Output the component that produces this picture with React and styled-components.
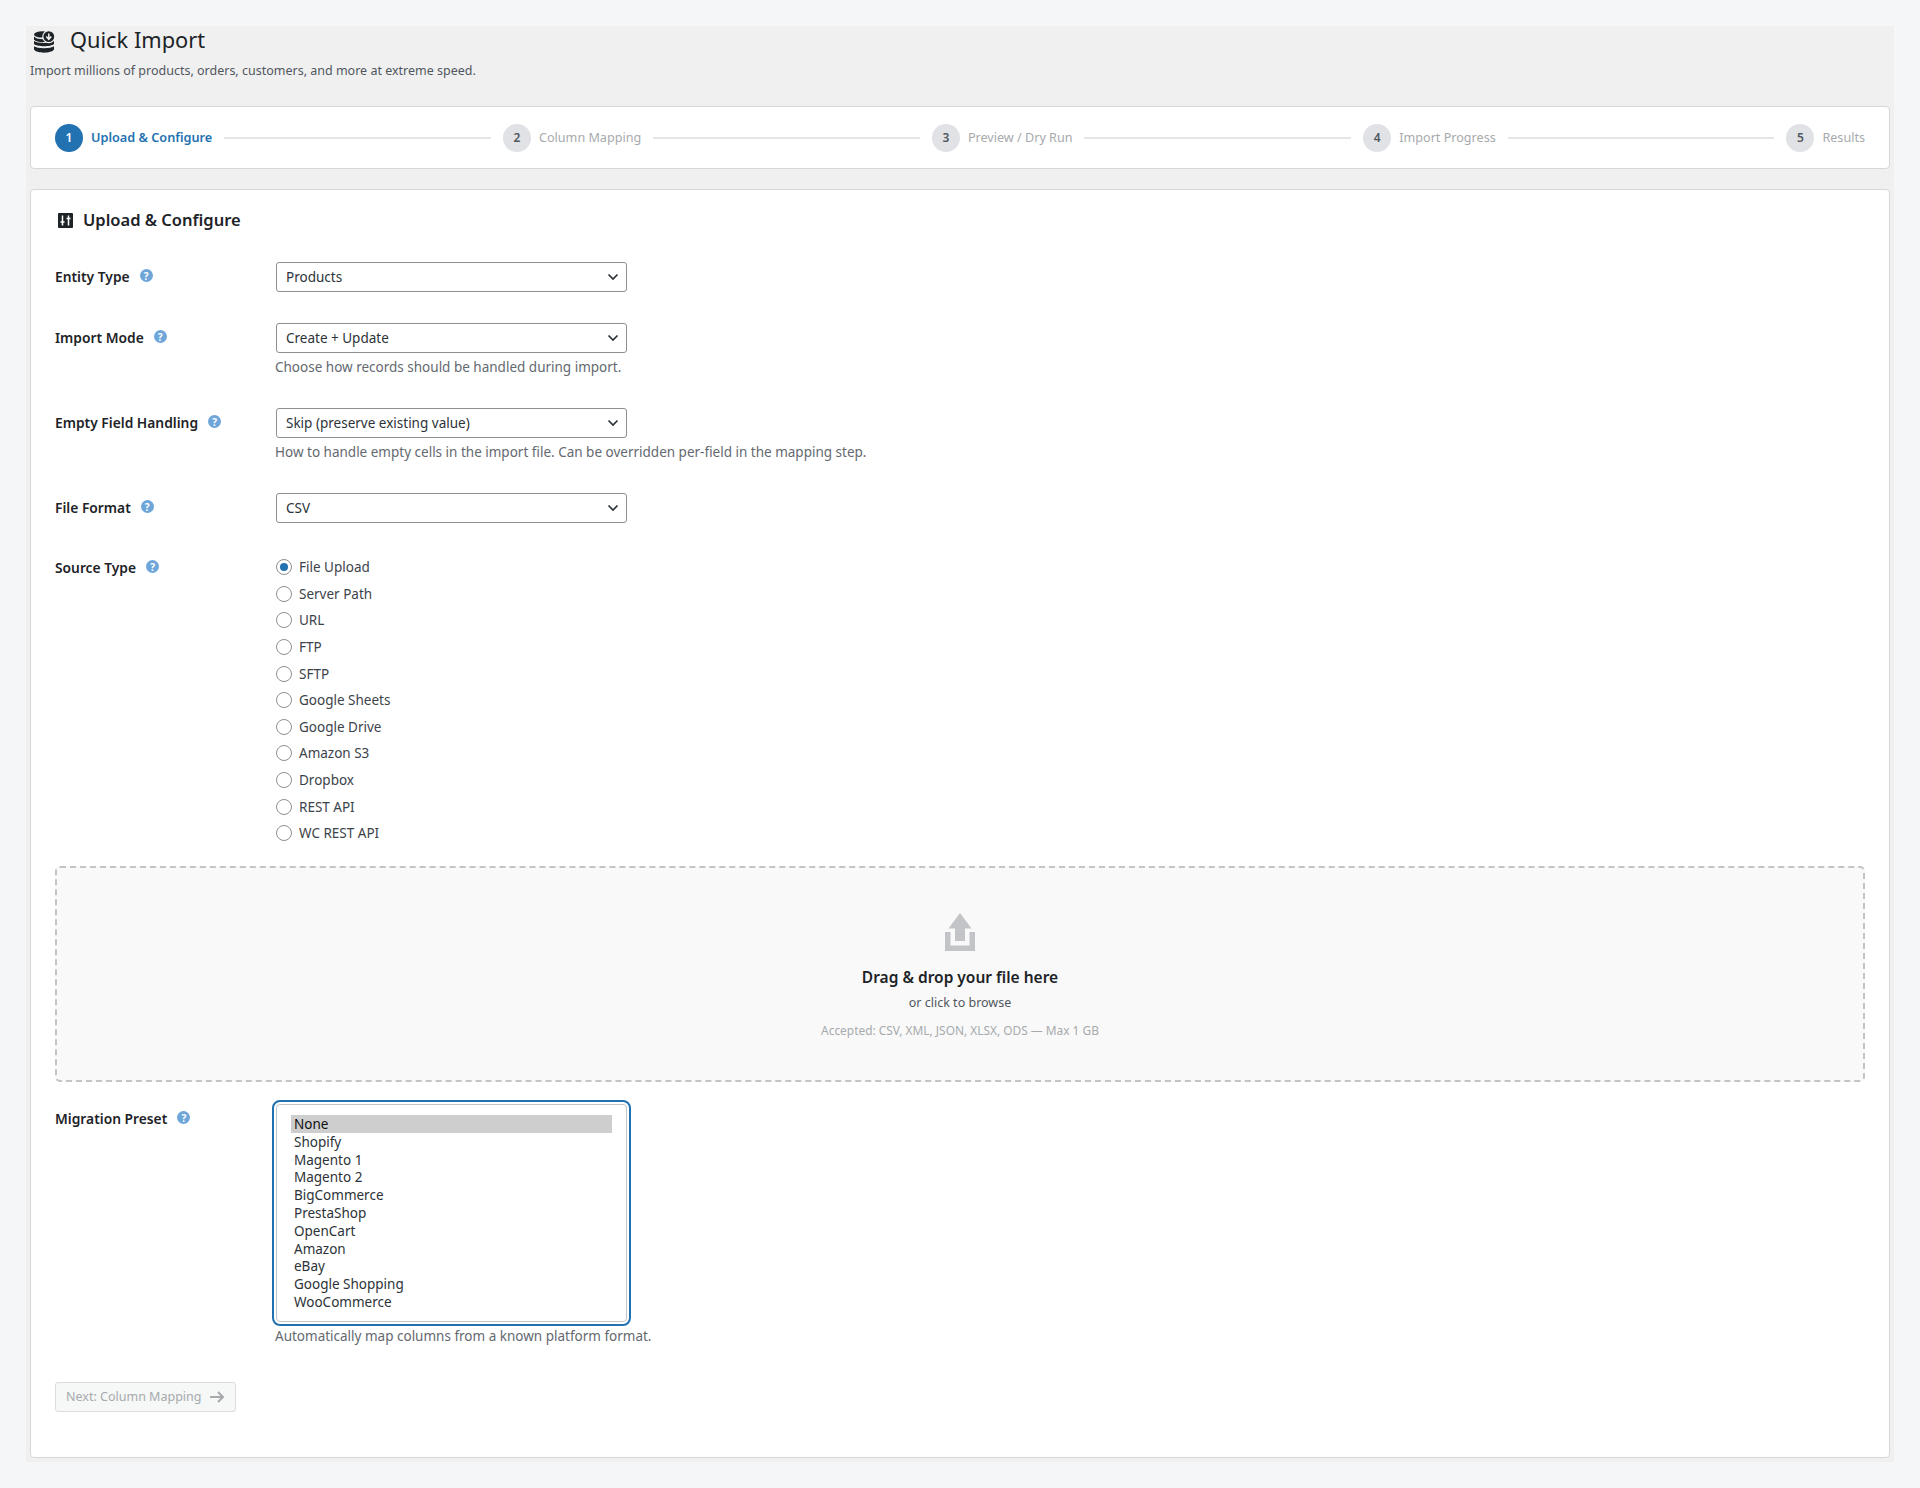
import React from "react";
import styled, { createGlobalStyle } from "styled-components";

const FONT = `"Noto Sans", "Open Sans", sans-serif`;
const CHEVRON = `url("data:image/svg+xml,%3Csvg xmlns='http://www.w3.org/2000/svg' viewBox='0 0 12 8'%3E%3Cpath d='M1.5 1.5 6 6l4.5-4.5' fill='none' stroke='%232c3338' stroke-width='1.7'/%3E%3C/svg%3E")`;

const GlobalStyle = createGlobalStyle`
  html, body {
    margin: 0;
    padding: 0;
    background: #f5f6f8;
  }
  body {
    font-family: ${FONT};
    font-size: 13px;
    color: #3c434a;
  }
`;

const Page = styled.div`
  margin: 26px 26px 27px 26px;
  padding: 0 4px 4px;
  background: #f0f0f1;
`;

const PageTitle = styled.div`
  display: flex;
  align-items: center;
  gap: 15px;
  height: 28px;
  padding: 0 0 0 4px;
`;

const TitleIcon = styled.svg`
  flex: none;
  margin-top: 4px;
`;

const PageHeading = styled.h1`
  margin: -1px 0 0;
  font-size: 21.8px;
  font-weight: 400;
  line-height: 28px;
  color: #1d2327;
`;

const Subtitle = styled.p`
  margin: 7px 0 25px;
  font-size: 12.5px;
  line-height: 20px;
  color: #50575e;
`;

const StepperCard = styled.div`
  display: flex;
  align-items: center;
  height: 63px;
  box-sizing: border-box;
  padding: 0 24px;
  background: #fff;
  border: 1px solid #d5d7da;
  border-radius: 4px;
`;

const Step = styled.div`
  display: flex;
  align-items: center;
  gap: 8px;
  flex: none;
`;

const StepNumber = styled.span`
  display: flex;
  align-items: center;
  justify-content: center;
  width: 28px;
  height: 28px;
  border-radius: 50%;
  font-size: 12px;
  font-weight: 600;
  background: ${({ $active }) => ($active ? "#2271b1" : "#e0e2e6")};
  color: ${({ $active }) => ($active ? "#fff" : "#50575e")};
`;

const StepLabel = styled.span`
  padding-bottom: ${({ $active }) => ($active ? "2px" : "0")};
  font-size: ${({ $active }) => ($active ? "12.7px" : "12.6px")};
  font-weight: ${({ $active }) => ($active ? 600 : 400)};
  color: ${({ $active }) => ($active ? "#2271b1" : "#a7aaad")};
`;

const StepLine = styled.span`
  flex: 1;
  height: 2px;
  margin: 1px 12px 0;
  background: #e3e5e8;
`;

const Card = styled.section`
  margin-top: 20px;
  padding: 20px 24px 45px;
  background: #fff;
  border: 1px solid #d5d7da;
  border-radius: 4px;
`;

const CardTitle = styled.h2`
  display: flex;
  align-items: center;
  gap: 10px;
  margin: 0 0 32px 3px;
  font-size: 16.5px;
  font-weight: 600;
  line-height: 20px;
  color: #1d2327;
`;

const Row = styled.div`
  display: grid;
  grid-template-columns: 220px 1fr;
  margin-bottom: ${({ $gap }) => $gap}px;
`;

const Label = styled.div`
  display: flex;
  align-items: center;
  align-self: start;
  gap: 10px;
  box-sizing: border-box;
  height: 30px;
  padding-bottom: 2px;
  font-size: 13.8px;
  font-weight: 600;
  color: #1d2327;
`;

const Help = styled.span`
  display: flex;
  align-items: center;
  justify-content: center;
  width: 13px;
  height: 13px;
  margin-top: -1px;
  border-radius: 50%;
  background: #6fa6da;
  color: #fff;
  font-size: 10px;
  font-weight: 700;
  line-height: 1;
`;

const Field = styled.div`
  min-width: 0;
`;

const Select = styled.select`
  display: block;
  box-sizing: border-box;
  width: 351px;
  height: 30px;
  margin-left: 1px;
  padding: 0 24px 0 9px;
  appearance: none;
  font-family: ${FONT};
  font-size: 13.5px;
  color: #2c3338;
  background: #fff ${CHEVRON} no-repeat right 7px center / 12px 8px;
  border: 1.5px solid #8c8f94;
  border-radius: 3px;
`;

const ListSelect = styled.select`
  display: block;
  box-sizing: border-box;
  width: 351px;
  height: 218px;
  margin-left: 1px;
  padding: 10px 14px;
  overflow: hidden;
  font-family: ${FONT};
  font-size: 13.5px;
  color: #2c3338;
  background: #fff;
  border: 1.5px solid #c3c4c7;
  border-radius: 4px;
  outline: 2px solid #2271b1;
  outline-offset: 2px;

  option {
    display: block;
    height: 17.8px;
    min-height: 0;
    padding: 0 3px;
    line-height: 17.8px;
  }
`;

const Description = styled.p`
  margin: 4px 0 0;
  font-size: 13.5px;
  line-height: 20px;
  color: #646970;
`;

const RadioList = styled.div`
  display: flex;
  flex-direction: column;
  padding-top: 1px;
`;

const RadioRow = styled.label`
  display: flex;
  align-items: center;
  gap: 7px;
  height: 26.6px;
  padding-left: 1px;
  font-size: 13.5px;
  color: #3c434a;
`;

const Radio = styled.input.attrs({ type: "radio", name: "source" })`
  appearance: none;
  flex: none;
  display: grid;
  place-items: center;
  box-sizing: border-box;
  width: 16px;
  height: 16px;
  margin: 0;
  background: #fff;
  border: 1px solid #8c8f94;
  border-radius: 50%;

  &:checked::before {
    content: "";
    width: 8px;
    height: 8px;
    border-radius: 50%;
    background: #2271b1;
  }
`;

const DropZone = styled.div`
  display: flex;
  flex-direction: column;
  align-items: center;
  box-sizing: border-box;
  height: 216px;
  margin-bottom: 22px;
  padding-top: 45px;
  background: #f9f9f9;
  border: 2px dashed #c3c4c7;
  border-radius: 5px;
`;

const DropTitle = styled.div`
  margin-top: 14px;
  font-size: 15.5px;
  font-weight: 600;
  line-height: 24px;
  color: #1d2327;
`;

const DropHint = styled.div`
  margin-top: 4px;
  font-size: 12.5px;
  line-height: 20px;
  color: #50575e;
`;

const DropAccepted = styled.div`
  margin-top: 8px;
  font-size: 11.9px;
  line-height: 18px;
  color: #a7aaad;
`;

const NextButton = styled.button`
  display: flex;
  align-items: center;
  gap: 8px;
  box-sizing: border-box;
  width: 181px;
  height: 30px;
  margin-top: 36px;
  padding: 0 0 1px 10px;
  font-family: ${FONT};
  font-size: 12.5px;
  color: #a7aaad;
  background: #f6f7f7;
  border: 1px solid #dcdcde;
  border-radius: 3px;
`;

const STEPS = ["Upload & Configure", "Column Mapping", "Preview / Dry Run", "Import Progress", "Results"];
const SOURCES = ["File Upload", "Server Path", "URL", "FTP", "SFTP", "Google Sheets", "Google Drive", "Amazon S3", "Dropbox", "REST API", "WC REST API"];
const PRESETS = ["None", "Shopify", "Magento 1", "Magento 2", "BigCommerce", "PrestaShop", "OpenCart", "Amazon", "eBay", "Google Shopping", "WooCommerce"];

const DatabaseIcon = () => (
  <TitleIcon width="21" height="22" viewBox="0 0 21 22" fill="#1d2327">
    <ellipse cx="8.5" cy="3.4" rx="8.5" ry="3.2" />
    <path d="M0 5.6c2 2.6 8 3 11 2.6V11c-4 .4-9 0-11-2.2z" />
    <path d="M0 10c3 2.4 15 2.6 20 0v3c-3 3-17 3-20 0z" />
    <path d="M0 15.2c3 2.6 17 2.6 20 0v3.4c-3 4.2-17 4.2-20 0z" />
    <circle cx="14.8" cy="5.6" r="6" stroke="#f0f0f1" strokeWidth="1.2" />
    <path d="M14.8 2.4v5.4M12.3 5.6l2.5 2.7 2.5-2.7" fill="none" stroke="#f0f0f1" strokeWidth="1.5" />
  </TitleIcon>
);

const SlidersIcon = () => (
  <svg width="15" height="15" viewBox="0 0 15 15">
    <rect width="15" height="15" rx="1" fill="#1d2327" />
    <path d="M4.5 2.5v10M2.5 9h4M10.5 2.5v10M8.5 5.5h4" stroke="#fff" strokeWidth="1.5" fill="none" />
  </svg>
);

const UploadIcon = () => (
  <svg width="30" height="38" viewBox="0 0 30 38" fill="#c3c4c7">
    <path d="M15 0 26.5 15.5H20V28H10V15.5H3.5z" />
    <path d="M0 19h5.5v13.5h19V19H30v19H0z" />
  </svg>
);

const ArrowIcon = () => (
  <svg width="16" height="16" viewBox="0 0 16 16" fill="none" stroke="#a7aaad" strokeWidth="2">
    <path d="M1 8h13M9 3l5 5-5 5" />
  </svg>
);

const Stepper = () => (
  <StepperCard>
    {STEPS.map((label, i) => (
      <React.Fragment key={label}>
        {i > 0 && <StepLine />}
        <Step>
          <StepNumber $active={i === 0}>{i + 1}</StepNumber>
          <StepLabel $active={i === 0}>{label}</StepLabel>
        </Step>
      </React.Fragment>
    ))}
  </StepperCard>
);

const FieldLabel = ({ children }) => (
  <Label>
    {children}
    <Help>?</Help>
  </Label>
);

const SelectRow = ({ label, options, description, gap }) => (
  <Row $gap={gap}>
    <FieldLabel>{label}</FieldLabel>
    <Field>
      <Select defaultValue={options[0]}>
        {options.map((o) => (
          <option key={o}>{o}</option>
        ))}
      </Select>
      {description && <Description>{description}</Description>}
    </Field>
  </Row>
);

const App = () => (
  <>
    <GlobalStyle />
    <Page>
      <PageTitle>
        <DatabaseIcon />
        <PageHeading>Quick Import</PageHeading>
      </PageTitle>
      <Subtitle>Import millions of products, orders, customers, and more at extreme speed.</Subtitle>
      <Stepper />
      <Card>
        <CardTitle>
          <SlidersIcon />
          Upload &amp; Configure
        </CardTitle>
        <SelectRow label="Entity Type" options={["Products"]} gap={31} />
        <SelectRow
          label="Import Mode"
          options={["Create + Update"]}
          description="Choose how records should be handled during import."
          gap={31}
        />
        <SelectRow
          label="Empty Field Handling"
          options={["Skip (preserve existing value)"]}
          description="How to handle empty cells in the import file. Can be overridden per-field in the mapping step."
          gap={31}
        />
        <SelectRow label="File Format" options={["CSV"]} gap={30} />
        <Row $gap={19.5}>
          <FieldLabel>Source Type</FieldLabel>
          <RadioList>
            {SOURCES.map((s, i) => (
              <RadioRow key={s}>
                <Radio defaultChecked={i === 0} />
                {s}
              </RadioRow>
            ))}
          </RadioList>
        </Row>
        <DropZone>
          <UploadIcon />
          <DropTitle>Drag &amp; drop your file here</DropTitle>
          <DropHint>or click to browse</DropHint>
          <DropAccepted>Accepted: CSV, XML, JSON, XLSX, ODS — Max 1 GB</DropAccepted>
        </DropZone>
        <Row $gap={0}>
          <FieldLabel>Migration Preset</FieldLabel>
          <Field>
            <ListSelect size={11} defaultValue="None">
              {PRESETS.map((p) => (
                <option key={p}>{p}</option>
              ))}
            </ListSelect>
            <Description>Automatically map columns from a known platform format.</Description>
          </Field>
        </Row>
        <NextButton disabled>
          Next: Column Mapping
          <ArrowIcon />
        </NextButton>
      </Card>
    </Page>
  </>
);

export default App;
